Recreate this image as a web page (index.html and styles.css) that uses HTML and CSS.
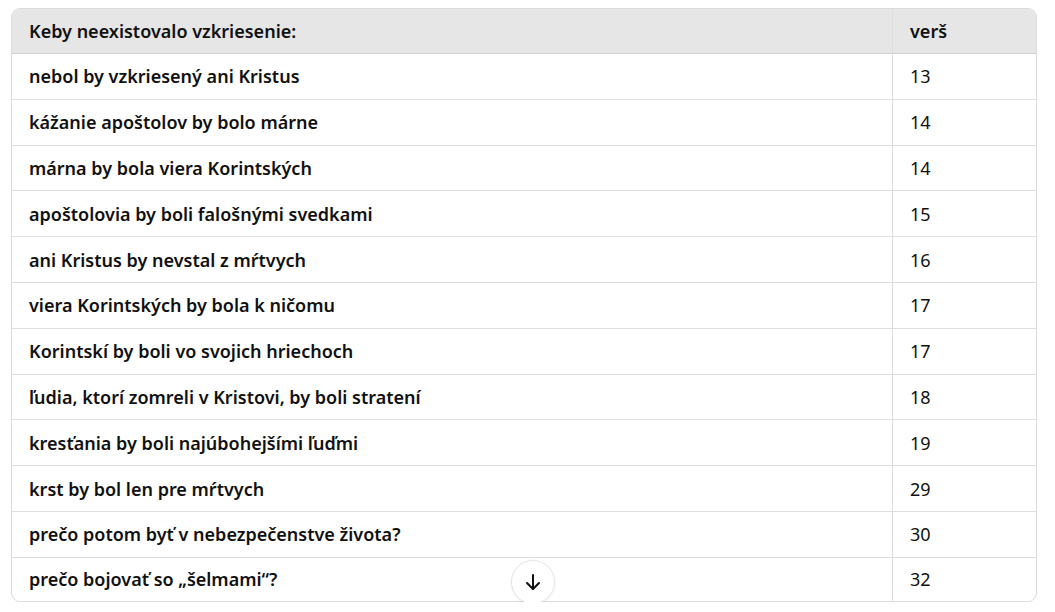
FILE: index.html
```html
<!DOCTYPE html>
<html lang="sk">
<head>
  <meta charset="UTF-8">
  <title>Keby neexistovalo vzkriesenie</title>
  <link rel="stylesheet" href="styles.css">
</head>
<body>
  <div class="table-wrap">
    <table class="verses">
      <thead>
        <tr>
          <th class="col-text">Keby neexistovalo vzkriesenie:</th>
          <th class="col-num">verš</th>
        </tr>
      </thead>
      <tbody>
        <tr><td class="col-text">nebol by vzkriesený ani Kristus</td><td class="col-num">13</td></tr>
        <tr><td class="col-text">kážanie apoštolov by bolo márne</td><td class="col-num">14</td></tr>
        <tr><td class="col-text">márna by bola viera Korintských</td><td class="col-num">14</td></tr>
        <tr><td class="col-text">apoštolovia by boli falošnými svedkami</td><td class="col-num">15</td></tr>
        <tr><td class="col-text">ani Kristus by nevstal z mŕtvych</td><td class="col-num">16</td></tr>
        <tr><td class="col-text">viera Korintských by bola k ničomu</td><td class="col-num">17</td></tr>
        <tr><td class="col-text">Korintskí by boli vo svojich hriechoch</td><td class="col-num">17</td></tr>
        <tr><td class="col-text">ľudia, ktorí zomreli v Kristovi, by boli stratení</td><td class="col-num">18</td></tr>
        <tr><td class="col-text">kresťania by boli najúbohejšími ľuďmi</td><td class="col-num">19</td></tr>
        <tr><td class="col-text">krst by bol len pre mŕtvych</td><td class="col-num">29</td></tr>
        <tr><td class="col-text">prečo potom byť v nebezpečenstve života?</td><td class="col-num">30</td></tr>
        <tr><td class="col-text">prečo bojovať so „šelmami“?</td><td class="col-num">32</td></tr>
      </tbody>
    </table>
    <button class="scroll-down" aria-label="Posunúť nadol">
      <svg width="20" height="20" viewBox="0 0 20 20" fill="none" stroke="#111" stroke-width="2" stroke-linecap="round" stroke-linejoin="round">
        <path d="M10 3v14"/>
        <path d="M4 11l6 6 6-6"/>
      </svg>
    </button>
  </div>
</body>
</html>
```

FILE: styles.css
```css
body {
  margin: 0;
  padding: 8px 18px 0 11px;
  background: #fff;
  font-family: "Noto Sans", "Open Sans", Arial, sans-serif;
  color: #111;
}

.table-wrap {
  position: relative;
  border: 1px solid #dcdcdc;
  border-radius: 9px;
}

.verses {
  width: 100%;
  border-collapse: collapse;
  font-size: 18px;
}

.verses th,
.verses td {
  text-align: left;
  padding: 0 17px;
  height: 44.8px;
  border-bottom: 1px solid #dedede;
}

.verses tbody tr:last-child td {
  border-bottom: none;
  height: 43px;
}

.verses thead th {
  background: #e6e6e6;
  height: 44px;
  font-weight: 600;
  border-bottom: 1px solid #d2d2d2;
}

.verses thead th:first-child {
  border-top-left-radius: 8px;
}

.verses thead th:last-child {
  border-top-right-radius: 8px;
}

.col-text {
  font-weight: 600;
}

.verses .col-num {
  width: 109px;
  font-weight: 400;
  border-left: 1px solid #dedede;
}

.verses thead .col-num {
  font-weight: 600;
}

.scroll-down {
  position: absolute;
  left: 499px;
  bottom: -3px;
  width: 44px;
  height: 44px;
  border-radius: 50%;
  border: 1px solid #e6e6e6;
  background: #fff;
  box-shadow: 0 1px 3px rgba(0, 0, 0, 0.06);
  display: flex;
  align-items: center;
  justify-content: center;
  padding: 0;
  cursor: pointer;
}
```
